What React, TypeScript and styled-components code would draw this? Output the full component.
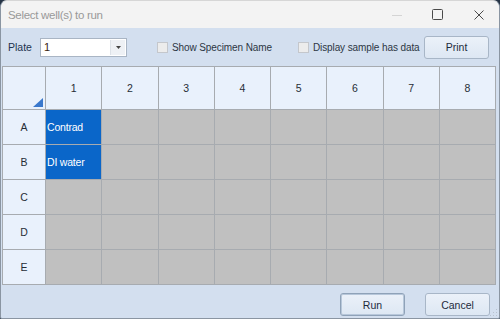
import React from "react";
import styled, { createGlobalStyle } from "styled-components";

const GlobalStyle = createGlobalStyle`
  html, body { margin: 0; padding: 0; width: 500px; height: 319px; overflow: hidden; background: #263446; }
  #root { width: 500px; height: 319px; }
  * { box-sizing: border-box; }
`;

const Window = styled.div`
  position: relative;
  width: 500px;
  height: 319px;
  display: flex;
  flex-direction: column;
  background: #d3dfef;
  border: 1px solid #8a95a2;
  border-top-color: #d6d6d6;
  border-radius: 7px 7px 2px 2px;
  overflow: hidden;
  font-family: "Liberation Sans", Arial, sans-serif;
  font-size: 10px;
  color: #1f2a38;
`;

const TitleBar = styled.div`
  height: 27px;
  flex: none;
  display: flex;
  align-items: center;
  background: #f3f3f3;
  padding-left: 7px;
`;

const Title = styled.div`
  flex: 1;
  font-size: 11.5px;
  letter-spacing: -0.3px;
  color: #999999;
`;

const ControlButton = styled.div`
  width: 41px;
  height: 27px;
  display: flex;
  align-items: center;
  justify-content: center;
`;

const Toolbar = styled.div`
  height: 38px;
  flex: none;
  display: flex;
  align-items: center;
  padding: 0 10px 0 7px;
`;

const PlateLabel = styled.span`
  width: 32px;
  color: #22344f;
  font-size: 10.5px;
`;

const Combo = styled.div`
  width: 87px;
  height: 19px;
  display: flex;
  background: #ffffff;
  border: 1px solid #a9b5c4;
`;

const ComboText = styled.div`
  flex: 1;
  padding-left: 3px;
  display: flex;
  align-items: center;
  font-size: 11px;
  color: #3a1e12;
`;

const ComboArrow = styled.div`
  width: 15px;
  display: flex;
  align-items: center;
  justify-content: center;
  background: #eef1f5;
  border-left: 1px solid #dde2e8;
  margin: 1px;
`;

const CheckGroup = styled.label<{ $ml: number }>`
  display: flex;
  align-items: center;
  gap: 4px;
  margin-left: ${(p) => p.$ml}px;
  color: #2c3644;
  font-size: 10px;
  letter-spacing: -0.1px;
`;

const Box = styled.span`
  width: 11px;
  height: 11px;
  background: #ececec;
  border: 1px solid #c4c7cc;
`;

const Button = styled.div<{ $default?: boolean }>`
  width: 65px;
  height: 23px;
  display: flex;
  align-items: center;
  justify-content: center;
  border-radius: 3px;
  border: 1px solid ${(p) => (p.$default ? "#8fa2b8" : "#a8b6c7")};
  box-shadow: ${(p) => (p.$default ? "inset 0 0 0 1px #b7c7da" : "none")};
  background: linear-gradient(#ebf1f9, #dde7f3);
  color: #1c2a3c;
  font-size: 10.5px;
`;

const PrintButton = styled(Button)`
  margin-left: auto;
`;

const Grid = styled.div`
  flex: none;
  margin: 0 3px 0 1px;
  display: grid;
  grid-template-columns: 42px repeat(8, 1fr);
  grid-template-rows: 42px repeat(5, 34px);
  gap: 1px;
  border: 1px solid #a7abb0;
  background: #a7abb0;
`;

const HeaderCell = styled.div`
  position: relative;
  background: #e9f1fc;
  display: flex;
  align-items: center;
  justify-content: center;
  font-size: 10.5px;
  color: #262d36;
`;

const Corner = styled.div`
  position: absolute;
  right: 2px;
  bottom: 2px;
  width: 0;
  height: 0;
  border-left: 10px solid transparent;
  border-bottom: 9px solid #3a78cc;
`;

const DataCell = styled.div<{ $selected: boolean }>`
  background: ${(p) => (p.$selected ? "#0a66c9" : "#c0c0c0")};
  color: #ffffff;
  display: flex;
  align-items: center;
  padding-left: 1px;
  font-size: 10.5px;
  letter-spacing: -0.2px;
  white-space: nowrap;
  overflow: hidden;
`;

const Footer = styled.div`
  flex: 1;
  display: flex;
  justify-content: flex-end;
  align-items: flex-start;
  gap: 20px;
  padding: 8px 9px 0 0;
`;

const Grip = styled.svg`
  position: absolute;
  right: 1px;
  bottom: 1px;
`;

const columns = [1, 2, 3, 4, 5, 6, 7, 8];
const rows = ["A", "B", "C", "D", "E"];
const samples: Record<string, string> = { A1: "Contrad", B1: "DI water" };

export default function App() {
  return (
    <>
      <GlobalStyle />
      <Window>
        <TitleBar>
          <Title>Select well(s) to run</Title>
          <ControlButton>
            <svg width="10" height="10" viewBox="0 0 10 10">
              <line x1="0" y1="5.5" x2="10" y2="5.5" stroke="#d4d4d4" strokeWidth="1" />
            </svg>
          </ControlButton>
          <ControlButton>
            <svg width="11" height="11" viewBox="0 0 11 11">
              <rect x="0.5" y="0.5" width="10" height="10" rx="1" fill="none" stroke="#4a4a4a" strokeWidth="1" />
            </svg>
          </ControlButton>
          <ControlButton>
            <svg width="10" height="10" viewBox="0 0 10 10">
              <path d="M0.5 0.5 L9.5 9.5 M9.5 0.5 L0.5 9.5" stroke="#4a4a4a" strokeWidth="1" />
            </svg>
          </ControlButton>
        </TitleBar>
        <Toolbar>
          <PlateLabel>Plate</PlateLabel>
          <Combo>
            <ComboText>1</ComboText>
            <ComboArrow>
              <svg width="5" height="3" viewBox="0 0 5 3">
                <path d="M0 0 L5 0 L2.5 3 Z" fill="#444" />
              </svg>
            </ComboArrow>
          </Combo>
          <CheckGroup $ml={30}>
            <Box />
            Show Specimen Name
          </CheckGroup>
          <CheckGroup $ml={26}>
            <Box />
            Display sample has data
          </CheckGroup>
          <PrintButton>Print</PrintButton>
        </Toolbar>
        <Grid>
          <HeaderCell>
            <Corner />
          </HeaderCell>
          {columns.map((c) => (
            <HeaderCell key={c}>{c}</HeaderCell>
          ))}
          {rows.map((r) => (
            <React.Fragment key={r}>
              <HeaderCell>{r}</HeaderCell>
              {columns.map((c) => {
                const s = samples[`${r}${c}`];
                return (
                  <DataCell key={c} $selected={!!s}>
                    {s}
                  </DataCell>
                );
              })}
            </React.Fragment>
          ))}
        </Grid>
        <Footer>
          <Button $default>Run</Button>
          <Button>Cancel</Button>
        </Footer>
        <Grip width="8" height="8" viewBox="0 0 8 8">
          <rect x="6" y="0" width="1" height="1" fill="#b8c2cf" />
          <rect x="3" y="3" width="1" height="1" fill="#b8c2cf" />
          <rect x="6" y="3" width="1" height="1" fill="#b8c2cf" />
          <rect x="0" y="6" width="1" height="1" fill="#b8c2cf" />
          <rect x="3" y="6" width="1" height="1" fill="#b8c2cf" />
          <rect x="6" y="6" width="1" height="1" fill="#b8c2cf" />
        </Grip>
      </Window>
    </>
  );
}
